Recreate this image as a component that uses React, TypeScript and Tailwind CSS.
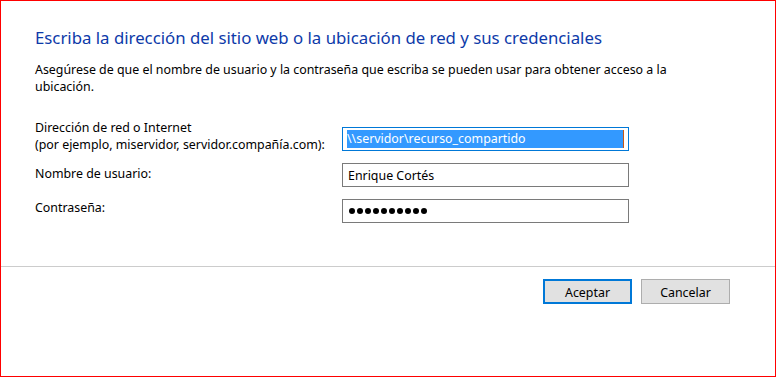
import React from "react";

export default function App() {
  return (
    <div
      className="w-[776px] h-[377px] border border-[#ff0000] bg-white flex flex-col text-black"
      style={{ fontFamily: '"Noto Sans", "Open Sans", sans-serif' }}
    >
      <div className="h-[265px] px-[34px] pt-[26px] flex flex-col">
        <div className="text-[16.8px] leading-[22px] text-[#0d3aa9] whitespace-nowrap">
          Escriba la dirección del sitio web o la ubicación de red y sus credenciales
        </div>
        <p className="mt-[12px] w-[690px] text-[12.4px] leading-[17px]">
          Asegúrese de que el nombre de usuario y la contraseña que escriba se pueden usar para obtener acceso a la ubicación.
        </p>
        <div className="mt-[24px] flex flex-col text-[12.4px] leading-[17px]">
          <div className="flex items-start">
            <div className="w-[307px] whitespace-nowrap">
              <div>Dirección de red o Internet</div>
              <div>(por ejemplo, miservidor, servidor.compañía.com):</div>
            </div>
            <div className="mt-[8px] w-[287px] h-[24px] border border-[#0078d7] flex items-center px-[4px]">
              <div className="flex-1 h-[18px] bg-[#3399ff] text-white leading-[18px] whitespace-nowrap overflow-hidden">
                \\servidor\recurso_compartido
              </div>
              <div className="w-[1px] h-[18px] bg-[#c0581a]" />
            </div>
          </div>
          <div className="mt-[10px] flex items-start">
            <div className="w-[307px] pt-[2px]">Nombre de usuario:</div>
            <div className="w-[287px] h-[24px] border border-[#7a7a7a] flex items-center px-[5px] whitespace-nowrap">
              Enrique Cortés
            </div>
          </div>
          <div className="mt-[12px] flex items-start">
            <div className="w-[307px]">Contraseña:</div>
            <div className="w-[287px] h-[24px] border border-[#7a7a7a] flex items-center gap-[2px] px-[6px]">
              {Array.from({ length: 10 }).map((_, i) => (
                <span key={i} className="w-[6px] h-[6px] rounded-full bg-black" />
              ))}
            </div>
          </div>
        </div>
      </div>
      <div className="h-[1px] bg-[#cccccc]" />
      <div className="flex justify-end gap-[9px] pt-[12px] pr-[45px] text-[12.4px]">
        <button className="w-[89px] h-[25px] border-2 border-[#0078d7] bg-[#e1e1e1] text-black leading-[21px] pt-[1px]">
          Aceptar
        </button>
        <button className="w-[89px] h-[25px] border border-[#adadad] bg-[#e1e1e1] text-black leading-[23px] pt-[1px]">
          Cancelar
        </button>
      </div>
    </div>
  );
}
